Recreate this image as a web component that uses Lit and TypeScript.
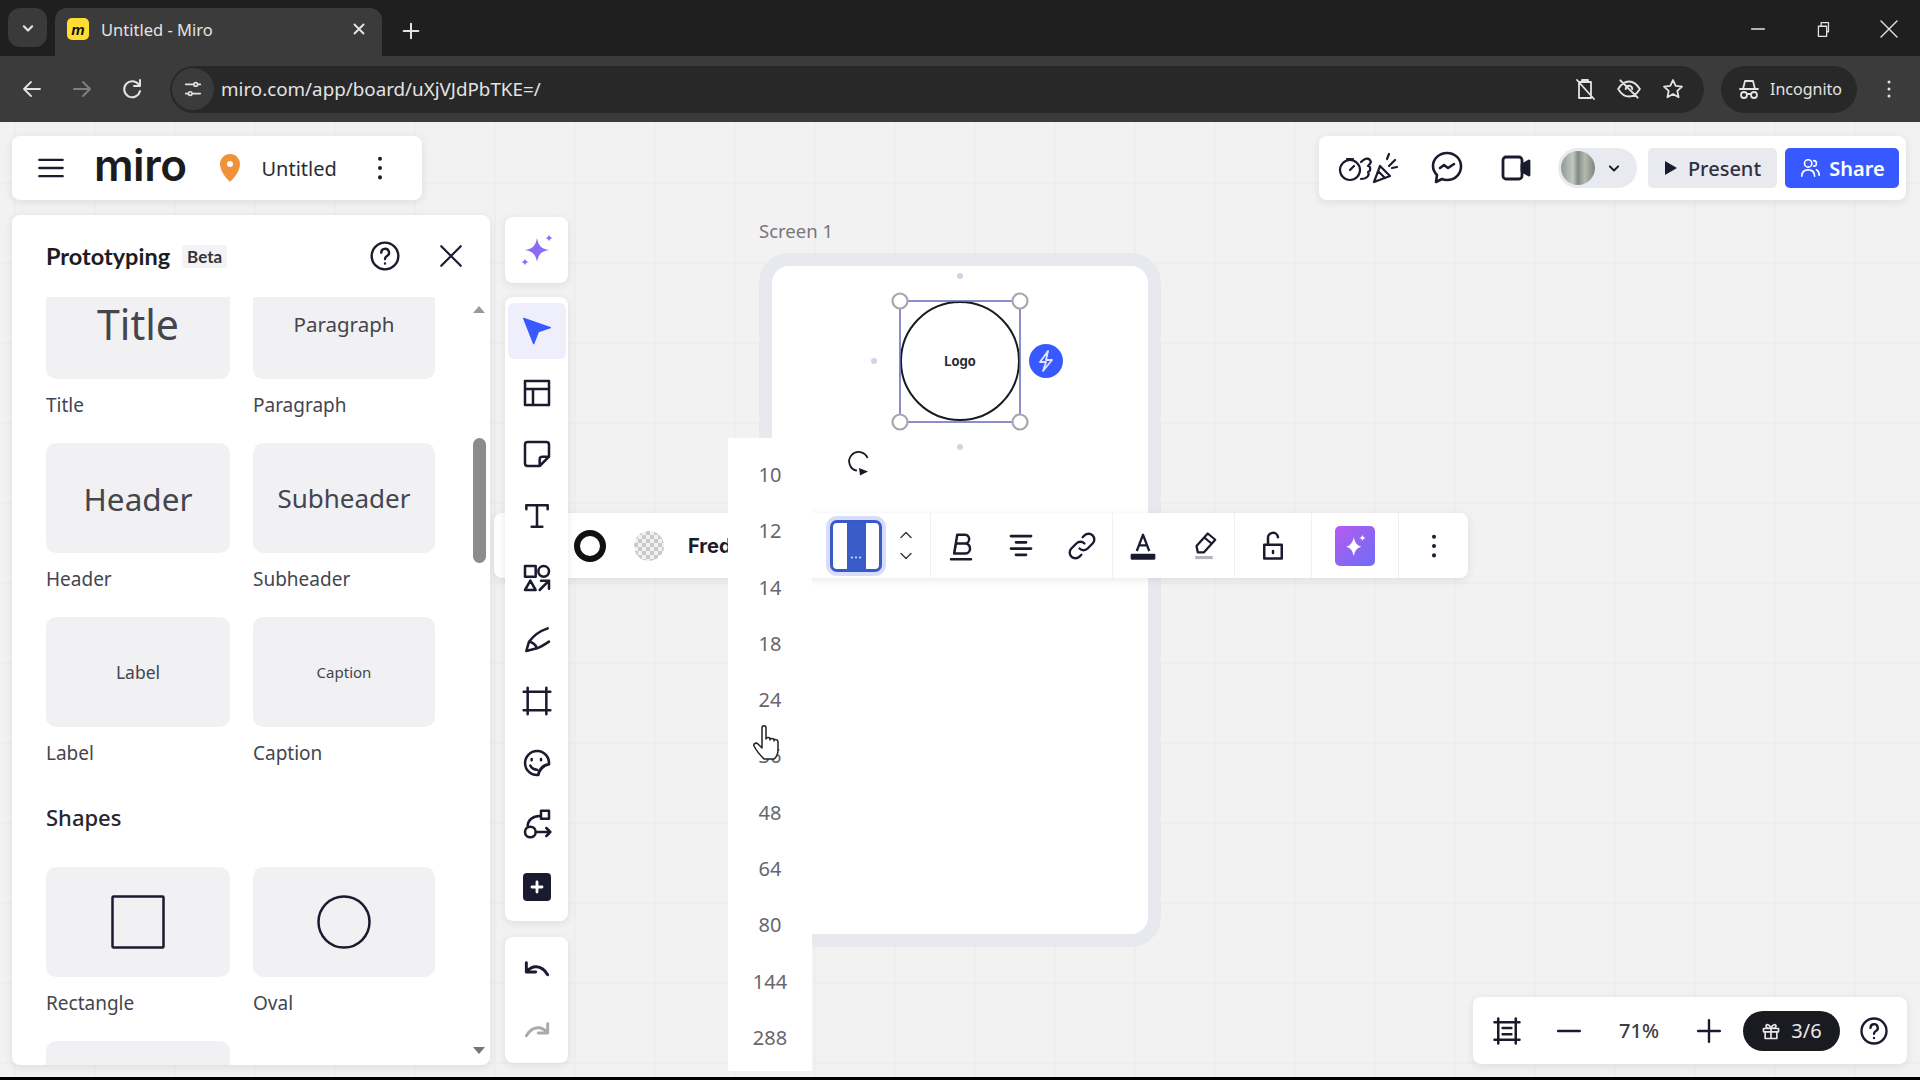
import { LitElement, html, css } from "lit";
import { customElement } from "lit/decorators.js";

const icon = (d: string, size = 30, sw = 2, fill = "none") => html`
  <svg width=${size} height=${size} viewBox="0 0 24 24" fill=${fill} stroke="currentColor"
    stroke-width=${sw} stroke-linecap="round" stroke-linejoin="round"><path d=${d}></path></svg>`;

const TOOLS = [
  "M3 3h18v18H3z M3 9h18 M9 9v12",
  "M5 3h14a2 2 0 0 1 2 2v9l-7 7H5a2 2 0 0 1-2-2V5a2 2 0 0 1 2-2z M21 14h-5a2 2 0 0 0-2 2v5",
  "M4 7V4h16v3 M12 4v16 M8 20h8",
  "M3 3h8v8H3z M21 7a4 4 0 1 1-8 0a4 4 0 0 1 8 0z M7 14l4 7H3z M14 21l7-7 M15 14h6v6",
  "M4 21l2-7C9 10 14 6 20 4 M4 21l8-2c3-1 6-3 9-5 M6 14c2 0 5 2 6 5",
  "M5 2v20 M19 2v20 M2 5h20 M2 19h20",
  "M21 13a9 9 0 1 0-8 8c1-4 4-7 8-8z M8 9v1 M15 9v1 M7 14c1 2 3 3 5 3 M13 21c0-4 4-8 8-8",
  "M15 2h6v6h-6z M11 18a4 4 0 1 1-8 0a4 4 0 0 1 8 0z M5 14c0-5 4-8 9-8 M11 18h11 M19 15l3 3-3 3",
];

const NUMBERS = ["10", "12", "14", "18", "24", "36", "48", "64", "80", "144", "288"];

const TEXT_CARDS = [
  ["Title", "t-title"], ["Paragraph", "t-para"],
  ["Header", "t-head"], ["Subheader", "t-sub"],
  ["Label", "t-label"], ["Caption", "t-cap"],
];

@customElement("app-root")
export class AppRoot extends LitElement {
  static styles = css`
    :host { display: block; width: 1920px; height: 1080px; overflow: hidden; font-family: "Noto Sans", sans-serif; background: #000; }
    .page { display: flex; flex-direction: column; height: 1080px; }

    /* browser chrome */
    .tabs { height: 56px; background: #1f1f1f; display: flex; align-items: flex-end; color: #e3e3e3; flex: none; }
    .tab-list { width: 39px; height: 39px; margin: 0 8px 9px 8px; border-radius: 12px; background: #3a3a3a; display: flex; align-items: center; justify-content: center; }
    .tab { width: 327px; height: 48px; background: #3b3b3b; border-radius: 12px 12px 0 0; display: flex; align-items: center; padding: 0 14px 6px 12px; box-sizing: border-box; font-size: 16.5px; }
    .fav { width: 22px; height: 22px; border-radius: 5px; background: #ffdd33; color: #111; display: flex; align-items: center; justify-content: center; font: italic 700 15px "Liberation Sans", sans-serif; margin-right: 12px; }
    .tab span.t { flex: 1; }
    .new-tab { margin: 0 0 14px 18px; display: flex; }
    .win { margin-left: auto; display: flex; gap: 43px; padding: 0 19px 15px 0; align-items: center; }
    .bar { height: 66px; background: #3b3b3b; display: flex; align-items: center; color: #e3e3e3; flex: none; padding-left: 20px; }
    .nav { display: flex; gap: 26px; align-items: center; width: 150px; }
    .nav span { color: #808080; display: flex; }
    .omni { width: 1534px; height: 47px; background: #282828; border-radius: 24px; display: flex; align-items: center; box-sizing: border-box; }
    .chip { width: 42px; height: 42px; margin-left: 2px; border-radius: 50%; background: #3b3b3b; display: flex; align-items: center; justify-content: center; }
    .url { font-size: 18.8px; margin-left: 7px; flex: 1; }
    .omni-icons { display: flex; gap: 19px; padding-right: 19px; align-items: center; }
    .incog { margin-left: 17px; width: 136px; height: 47px; background: #282828; border-radius: 24px; display: flex; align-items: center; gap: 9px; padding-left: 16px; box-sizing: border-box; font-size: 16px; }
    .more { margin-left: 20px; display: flex; }

    /* board */
    .board { position: relative; flex: 1; background-color: #f2f2f3;
      background-image: linear-gradient(#eeeeef 2px, transparent 2px), linear-gradient(90deg, #eeeeef 2px, transparent 2px);
      background-size: 80px 80px; background-position: 14px 60px; overflow: hidden; color: #1a1b2e; }
    .black { height: 3px; background: #000; flex: none; }
    .float { position: absolute; background: #fff; border-radius: 8px; box-shadow: 0 2px 8px rgba(34, 36, 40, 0.10); }

    .head { left: 12px; top: 14px; width: 410px; height: 64px; display: flex; align-items: center; }
    .burger { margin-left: 25px; display: flex; }
    .logo { font: 600 44px/1 "Inter", sans-serif; margin-left: 29px; letter-spacing: -0.5px; color: #1c1c1e; position: relative; top: -3px; }
    .pin { margin-left: 33px; display: flex; }
    .doc { font-size: 20px; margin-left: 20px; color: #2b2b33; }
    .head .dots { margin-left: 29px; display: flex; }

    .actions { left: 1319px; top: 14px; width: 587px; height: 64px; display: flex; align-items: center; }
    .act-ico { display: flex; align-items: center; justify-content: center; }
    .react { margin-left: 18px; }
    .chat { margin-left: 32px; }
    .video { margin-left: 38px; }
    .avatar-pill { margin-left: 27px; width: 79px; height: 40px; border-radius: 20px; background: #e9eaef; display: flex; align-items: center; padding-left: 3px; box-sizing: border-box; gap: 9px; }
    .avatar { width: 34px; height: 34px; border-radius: 50%; background: linear-gradient(90deg, #8d9a94, #c3c8c0 35%, #7f8a84 50%, #b5bab0 70%, #7b857c); }
    .present { margin-left: 11px; width: 129px; height: 40px; border-radius: 5px; background: #e9eaef; display: flex; align-items: center; justify-content: center; gap: 10px; font-size: 20px; font-weight: 500; color: #2f3040; }
    .share { margin-left: 8px; width: 114px; height: 40px; border-radius: 5px; background: #3859ff; color: #fff; display: flex; align-items: center; justify-content: center; gap: 8px; font-size: 20px; font-weight: 600; }

    /* prototyping panel */
    .panel { left: 12px; top: 93px; width: 478px; height: 850px; overflow: hidden; }
    .panel-head { height: 82px; display: flex; align-items: center; padding-left: 34px; box-sizing: border-box; }
    .panel-title { font: 700 23.5px "Lato", sans-serif; color: #1c1c24; }
    .beta { margin-left: 12px; font: 700 17px "Lato", sans-serif; background: #f3f3f6; border-radius: 3px; padding: 1px 5px; color: #33333d; }
    .help { margin-left: auto; display: flex; }
    .close { margin: 0 26px 0 37px; display: flex; }
    .scroll { height: 768px; overflow: hidden; padding-left: 34px; position: relative; }
    .grid { display: grid; grid-template-columns: 184px 182px; column-gap: 23px; margin-top: -28px; }
    .item { height: 174px; }
    .card { height: 110px; background: #f1f1f3; border-radius: 10px; display: flex; align-items: center; justify-content: center; color: #44454e; }
    .name { margin-top: 15px; font-size: 19px; line-height: 22px; color: #44454e; }
    .t-title { font-size: 41px; }
    .t-para { font-size: 20.5px; }
    .t-head { font-size: 31.5px; }
    .t-sub { font-size: 26px; }
    .t-label { font-size: 17.5px; }
    .t-cap { font-size: 15px; }
    .section { grid-column: 1 / 3; height: 76px; font-size: 22px; font-weight: 500; line-height: 52px; color: #26262e; }
    .scrollbar { position: absolute; right: 4px; top: 141px; width: 13px; height: 125px; background: #8c8c8c; border-radius: 7px; }
    .arrow { position: absolute; right: 5px; width: 0; height: 0; border-left: 6px solid transparent; border-right: 6px solid transparent; }
    .arrow.up { top: 9px; border-bottom: 7px solid #9a9a9a; }
    .arrow.down { bottom: 11px; border-top: 7px solid #757575; }

    /* tool bars */
    .ai-box { left: 505px; top: 95px; width: 63px; height: 66px; display: flex; align-items: center; justify-content: center; }
    .tools { left: 505px; top: 175px; width: 63px; height: 624px; display: flex; flex-direction: column; align-items: center; padding-top: 3px; box-sizing: border-box; }
    .tool { height: 61.7px; width: 100%; display: flex; align-items: center; justify-content: center; flex: none; }
    .tool.on { background: #eeeffb; width: 58px; height: 56px; border-radius: 6px; margin: 3px 0 2.7px; padding-bottom: 4px; box-sizing: border-box; }
    .plus { width: 28px; height: 28px; margin-top: 2px; border-radius: 4px; background: #1a1b2e; color: #fff; display: flex; align-items: center; justify-content: center; }
    .undo { left: 505px; top: 815px; width: 63px; height: 126px; display: flex; flex-direction: column; align-items: center; justify-content: space-around; padding-top: 4px; box-sizing: border-box; }
    .redo { color: #a9a9ae; display: flex; }

    /* frame on the board */
    .frame-label { position: absolute; left: 759px; top: 96px; font-size: 18.5px; color: #77777f; }
    .frame { position: absolute; left: 759px; top: 131px; width: 402px; height: 694px; box-sizing: border-box; border: 13px solid #e8e9ee; border-radius: 30px; background: #fff; }
    .sel { position: absolute; left: 840px; top: 140px; }

    /* text format bar */
    .fmt { left: 494px; top: 391px; width: 974px; height: 65px; display: flex; align-items: center; }
    .pad { width: 76px; }
    .border-cell { width: 40px; display: flex; justify-content: center; }
    .ring { width: 20px; height: 20px; border: 6px solid #111; border-radius: 50%; }
    .check-cell { width: 78px; display: flex; justify-content: center; }
    .checker { width: 30px; height: 30px; border-radius: 50%; background: repeating-conic-gradient(#c9c9c9 0 25%, #f1f1f1 0 50%) 0 0 / 8px 8px; }
    .font-name { width: 142px; font: 700 20px "Inter", sans-serif; color: #1a1b2e; white-space: nowrap; overflow: hidden; }
    .size { width: 52px; height: 52px; box-sizing: border-box; border: 3px solid #3859c8; border-radius: 7px; box-shadow: 0 0 0 4px #d9ddfb; display: flex; justify-content: center; background: #fff; }
    .size i { width: 19px; background: #3a5cc8; display: flex; align-items: flex-end; justify-content: center; padding-bottom: 10px; box-sizing: border-box; }
    .chev { width: 48px; display: flex; flex-direction: column; align-items: center; gap: 1px; color: #3c3d46; }
    .group { height: 65px; display: flex; align-items: center; justify-content: space-around; border-left: 1px solid #f0f0f3; box-sizing: border-box; }
    .g1 { width: 182px; }
    .g2 { width: 122px; }
    .g3 { width: 77px; }
    .g4 { width: 87px; }
    .g5 { width: 70px; }
    .ai-btn { width: 40px; height: 40px; border-radius: 5px; background: linear-gradient(135deg, #b45cf0, #6f6cf5); color: #fff; display: flex; align-items: center; justify-content: center; }

    /* size dropdown */
    .drop { position: absolute; left: 728px; top: 316px; width: 84px; height: 633px; background: #fff; display: flex; flex-direction: column; align-items: center; padding-top: 9px; box-sizing: border-box; font-size: 20px; color: #66666e; }
    .drop div { height: 56.3px; line-height: 56.3px; flex: none; }
    .hand { position: absolute; left: 752px; top: 602px; }

    /* zoom bar */
    .zoom { left: 1473px; top: 875px; width: 434px; height: 67px; display: flex; align-items: center; }
    .fit { margin-left: 19px; display: flex; }
    .minus { margin-left: 34px; display: flex; }
    .pct { width: 84px; margin-left: 15px; text-align: center; font-size: 20px; font-weight: 500; color: #3c3d46; }
    .zplus { margin-left: 15px; display: flex; }
    .gift { margin-left: 21px; width: 97px; height: 40px; border-radius: 20px; background: #1a1b20; color: #e8e8e8; display: flex; align-items: center; justify-content: center; gap: 10px; font-size: 20px; }
    .zhelp { margin-left: 19px; display: flex; }
  `;

  render() {
    return html`
      <div class="page">
        ${this.chrome()}
        <div class="board">
          <div class="frame-label">Screen 1</div>
          <div class="frame"></div>
          ${this.selection()}
          ${this.formatBar()}
          <div class="drop">${NUMBERS.map((n) => html`<div>${n}</div>`)}</div>
          <svg class="hand" width="32" height="38" viewBox="0 0 32 38" fill="#fff" stroke="#222" stroke-width="1.5" stroke-linejoin="round">
            <path d="M10 4c0-3 4-3 4 0v11c0-2 4-2 4 0v1c0-2 4-2 4 0v1c0-2 4-2 4 1v8c0 4-2 8-4 9H12c-2-2-8-9-10-13-1-2 2-4 4-2l4 4z"></path>
          </svg>
          ${this.header()}
          ${this.actions()}
          ${this.panel()}
          ${this.toolbars()}
          ${this.zoomBar()}
        </div>
        <div class="black"></div>
      </div>
    `;
  }

  chrome() {
    return html`
      <div class="tabs">
        <div class="tab-list">${icon("M7 10l5 5 5-5", 20, 2.6)}</div>
        <div class="tab">
          <div class="fav">m</div>
          <span class="t">Untitled - Miro</span>
          ${icon("M6 6l12 12 M18 6L6 18", 18, 2.6)}
        </div>
        <div class="new-tab">${icon("M12 4v16 M4 12h16", 22, 2.2)}</div>
        <div class="win">
          ${icon("M5 12h14", 22, 1.4)}
          ${icon("M7 9h9v11H7z M10 9V5h8v10h-2", 22, 1.4)}
          ${icon("M4 4l16 16 M20 4L4 20", 24, 1.4)}
        </div>
      </div>
      <div class="bar">
        <div class="nav">
          ${icon("M20 12H5 M11 5l-7 7 7 7", 24, 1.8)}
          <span>${icon("M4 12h15 M13 5l7 7-7 7", 24, 1.8)}</span>
          ${icon("M19 8a8 8 0 1 0 1 6 M20 3v6h-6", 24, 2)}
        </div>
        <div class="omni">
          <div class="chip">${icon("M4 7h9 M18 7h2 M4 17h2 M11 17h9 M17 7a2 2 0 1 0-4 0a2 2 0 0 0 4 0z M11 17a2 2 0 1 0-4 0a2 2 0 0 0 4 0z", 22, 1.8)}</div>
          <div class="url">miro.com/app/board/uXjVJdPbTKE=/</div>
          <div class="omni-icons">
            ${icon("M6 5h12v16H6z M9 5V3h6v2 M4 3l17 19", 24, 1.8)}
            ${icon("M2 12c3-5 6-7 10-7s7 2 10 7c-3 5-6 7-10 7s-7-2-10-7z M9 12a3 3 0 0 1 6 0 M4 4l16 16", 26, 1.8)}
            ${icon("M12 3l2.7 5.9 6.3.7-4.7 4.3 1.3 6.3L12 17l-5.6 3.2 1.3-6.3L3 9.6l6.3-.7z", 24, 1.8)}
          </div>
        </div>
        <div class="incog">
          ${icon("M3 12h18 M6 12l2-8h8l2 8 M10 18a3 3 0 1 1-6 0a3 3 0 0 1 6 0z M20 18a3 3 0 1 1-6 0a3 3 0 0 1 6 0z M10 17h4", 24, 1.8)}
          <span>Incognito</span>
        </div>
        <div class="more">${icon("M12 5v.1 M12 12v.1 M12 19v.1", 24, 3)}</div>
      </div>
    `;
  }

  header() {
    return html`
      <div class="float head">
        <div class="burger">${icon("M2 5h20 M2 12h20 M2 19h20", 28, 2)}</div>
        <div class="logo">miro</div>
        <div class="pin">
          <svg width="22" height="30" viewBox="0 0 22 30"><path d="M11 1C5 1 1 6 1 11c0 7 6 14 10 18 4-4 10-11 10-18 0-5-4-10-10-10z" fill="#f0923a"></path><circle cx="11" cy="11" r="3" fill="#fff"></circle></svg>
        </div>
        <div class="doc">Untitled</div>
        <div class="dots">${icon("M12 4v.1 M12 12v.1 M12 20v.1", 28, 3.4)}</div>
      </div>
    `;
  }

  actions() {
    return html`
      <div class="float actions">
        <div class="act-ico react">
          <svg width="62" height="36" viewBox="0 0 62 36" fill="none" stroke="#1a1b2e" stroke-width="2.2" stroke-linejoin="round" stroke-linecap="round">
            <circle cx="13" cy="20" r="10"></circle><path d="M13 20l4-4 M10 9h6"></path>
            <path d="M24 12c3-3 8-6 10 0-1 2-2 3-3 4 3 0 3 5 0 6 2 3-1 7-7 7"></path>
            <path d="M37 32l6-16 10 10z M42 22l6 6 M52 16l6-6 M50 9l2-5 M55 18l5-1"></path>
          </svg>
        </div>
        <div class="act-ico chat">
          <svg width="32" height="34" viewBox="0 0 32 34" fill="none" stroke="#1a1b2e" stroke-width="2.6" stroke-linejoin="round" stroke-linecap="round">
            <path d="M16 2c8 0 14 6 14 13.5S24 29 16 29c-2 0-3 0-5-1l-6 3 1-7c-3-3-4-6-4-9C2 8 8 2 16 2z"></path><path d="M9 17l4-3 4 3 6-4"></path>
          </svg>
        </div>
        <div class="act-ico video">
          <svg width="30" height="28" viewBox="0 0 30 28" fill="none" stroke="#1a1b2e" stroke-width="2.8" stroke-linejoin="round"><rect x="2" y="3" width="19" height="22" rx="3"></rect><path d="M21 11l7-4v14l-7-4z" fill="#1a1b2e"></path></svg>
        </div>
        <div class="avatar-pill"><div class="avatar"></div>${icon("M7 10l5 5 5-5", 20, 2.4)}</div>
        <div class="present">
          <svg width="14" height="16" viewBox="0 0 14 16"><path d="M1 1l12 7-12 7z" fill="#1a1b2e"></path></svg>
          <span>Present</span>
        </div>
        <div class="share">
          ${icon("M10 11a4 4 0 1 0 0-8a4 4 0 0 0 0 8z M3 21c0-5 3-7 7-7s7 2 7 7 M16 4a3 3 0 0 1 0 6 M19 14c2 1 3 3 3 6", 22, 1.8)}
          <span>Share</span>
        </div>
      </div>
    `;
  }

  panel() {
    return html`
      <div class="float panel">
        <div class="panel-head">
          <span class="panel-title">Prototyping</span>
          <span class="beta">Beta</span>
          <span class="help">${icon("M12 22a10 10 0 1 0 0-20a10 10 0 0 0 0 20z M9.2 9.5a2.9 2.9 0 1 1 4.3 2.5c-1 .6-1.500 1.200-1.500 2.200 M12 17.500v.1", 32, 1.8)}</span>
          <span class="close">${icon("M3 3l18 18 M21 3L3 21", 26, 2)}</span>
        </div>
        <div class="scroll">
          <div class="grid">
            ${TEXT_CARDS.map(([name, cls]) => html`
              <div class="item">
                <div class="card"><span class=${cls}>${name}</span></div>
                <div class="name">${name}</div>
              </div>`)}
            <div class="section">Shapes</div>
            <div class="item">
              <div class="card">
                <svg width="54" height="54" viewBox="0 0 54 54" fill="none" stroke="#1a1b2e" stroke-width="2.5"><rect x="1.5" y="1.5" width="51" height="51" rx="1"></rect></svg>
              </div>
              <div class="name">Rectangle</div>
            </div>
            <div class="item">
              <div class="card">
                <svg width="54" height="54" viewBox="0 0 54 54" fill="none" stroke="#1a1b2e" stroke-width="2.5"><circle cx="27" cy="27" r="25.5"></circle></svg>
              </div>
              <div class="name">Oval</div>
            </div>
            <div class="item"><div class="card"></div></div>
          </div>
          <div class="arrow up"></div>
          <div class="scrollbar"></div>
          <div class="arrow down"></div>
        </div>
      </div>
    `;
  }

  toolbars() {
    return html`
      <div class="float ai-box">
        <svg width="34" height="34" viewBox="0 0 24 24" fill="#8b6cf2">
          <path d="M12 3.5c1 5.500 3 7.500 8.500 8.500-5.500 1-7.500 3-8.500 8.500-1-5.500-3-7.500-8.500-8.500 5.500-1 7.500-3 8.500-8.500z"></path>
          <path d="M20.500 1c.3 1.500.9 2.100 2.500 2.500-1.600.4-2.200 1-2.500 2.500-.3-1.500-.9-2.100-2.500-2.500 1.600-.4 2.200-1 2.500-2.500z"></path>
          <path d="M3.500 18c.3 1.500.9 2.100 2.500 2.500-1.600.4-2.200 1-2.500 2.500-.3-1.500-.9-2.100-2.500-2.500 1.600-.4 2.200-1 2.500-2.500z"></path>
        </svg>
      </div>
      <div class="float tools">
        <div class="tool on">
          <svg width="32" height="32" viewBox="0 0 24 24"><path d="M2 4l20 7-9 3-3.5 9z" fill="#3859ff" stroke="#3859ff" stroke-width="1" stroke-linejoin="round"></path></svg>
        </div>
        ${TOOLS.map((d) => html`<div class="tool">${icon(d, 32, 1.9)}</div>`)}
        <div class="tool"><div class="plus">${icon("M12 6v12 M6 12h12", 20, 3.4)}</div></div>
      </div>
      <div class="float undo">
        ${icon("M4 5v7h7 M4 12c4-5 11-6 16 2", 32, 2.2)}
        <span class="redo">${icon("M20 5v7h-7 M20 12c-4-5-11-6-16 2", 32, 2.2)}</span>
      </div>
    `;
  }

  selection() {
    return html`
      <svg class="sel" width="230" height="220" viewBox="840 262 230 220" fill="none">
        <circle cx="960" cy="361" r="59" stroke="#1a1a24" stroke-width="2"></circle>
        <rect x="900" y="301" width="120" height="121" stroke="#6468b8" stroke-width="1.5"></rect>
        <g fill="#fff" stroke="#a6a6ac" stroke-width="2.2">
          <circle cx="900" cy="301" r="7.5"></circle><circle cx="1020" cy="301" r="7.5"></circle>
          <circle cx="900" cy="422" r="7.5"></circle><circle cx="1020" cy="422" r="7.5"></circle>
        </g>
        <g fill="#cfd3e6"><circle cx="960" cy="276" r="3"></circle><circle cx="874" cy="361" r="3"></circle><circle cx="960" cy="447" r="3"></circle></g>
        <text x="960" y="366" text-anchor="middle" font-family="Inter, sans-serif" font-weight="700" font-size="13" fill="#2a2a33">Logo</text>
        <circle cx="1046" cy="361" r="17" fill="#3859ff"></circle>
        <path d="M1048 351l-8 11h6l-3 9 9-11h-6z" stroke="#dfe4ff" stroke-width="1.8" stroke-linejoin="round"></path>
        <path d="M866 456a9.5 9.5 0 1 0-7 15" stroke="#1a1a24" stroke-width="1.8" transform="rotate(15 859 463)"></path>
        <path d="M859 468l9 3.500-8 4z" fill="#1a1a24"></path>
      </svg>
    `;
  }

  formatBar() {
    return html`
      <div class="float fmt">
        <div class="pad"></div>
        <div class="border-cell"><div class="ring"></div></div>
        <div class="check-cell"><div class="checker"></div></div>
        <div class="font-name">Fred</div>
        <div class="size">
          <i><svg width="12" height="3" viewBox="0 0 12 3" fill="#dfe6ff"><circle cx="2" cy="1.5" r="1"></circle><circle cx="6" cy="1.5" r="1"></circle><circle cx="10" cy="1.5" r="1"></circle></svg></i>
        </div>
        <div class="chev">${icon("M6 15l6-6 6 6", 20, 1.8)}${icon("M6 9l6 6 6-6", 20, 1.8)}</div>
        <div class="group g1">
          ${icon("M9 3h5.500a3.500 3.500 0 0 1 1 7 M8 10h7.500a4 4 0 0 1-.5 8H6.500z M9 3L6.500 18 M4 22.500h16", 30, 2)}
          ${icon("M4 4h16 M8 9h8 M4 14h16 M8 19h8", 30, 2.2)}
          ${icon("M10 14a4.500 4.500 0 0 0 6.500 0l4-4a4.500 4.500 0 0 0-6.500-6.500l-1.500 1.500 M14 10a4.500 4.500 0 0 0-6.500 0l-4 4a4.500 4.500 0 0 0 6.500 6.500l1.500-1.500", 30, 1.9)}
        </div>
        <div class="group g2">
          <svg width="30" height="30" viewBox="0 0 24 24" fill="none" stroke="#1a1b2e" stroke-width="1.8" stroke-linejoin="round"><path d="M7 16l5-13 5 13 M9 11.500h6"></path><rect x="3" y="19" width="18" height="3" fill="#1a1b2e"></rect></svg>
          <svg width="30" height="30" viewBox="0 0 24 24" fill="none" stroke="#1a1b2e" stroke-width="1.8" stroke-linejoin="round"><path d="M15 2l6 5-9 10-5 0-1-5z M12 5l6 5"></path><rect x="5" y="20" width="14" height="2.500" fill="#b5b5b8" stroke="none"></rect></svg>
        </div>
        <div class="group g3">${icon("M5 11h14v11H5z M8 11V6a4 4 0 0 1 8-1 M12 16v1.500", 30, 2)}</div>
        <div class="group g4">
          <div class="ai-btn">
            <svg width="30" height="30" viewBox="0 0 24 24" fill="#fff"><path d="M11 5c1 4.500 2.500 6.500 6 7.500-3.500 1-5 3-6 7.500-1-4.500-2.500-6.500-6-7.500 3.500-1 5-3 6-7.500z"></path><path d="M18 3c.3 1.500.9 2.100 2.500 2.500-1.600.4-2.200 1-2.500 2.500-.3-1.500-.9-2.100-2.500-2.500 1.600-.4 2.200-1 2.500-2.500z"></path></svg>
          </div>
        </div>
        <div class="group g5">${icon("M12 4v.1 M12 12v.1 M12 20v.1", 28, 3.4)}</div>
      </div>
    `;
  }

  zoomBar() {
    return html`
      <div class="float zoom">
        <div class="fit">${icon("M5 2v20 M19 2v20 M2 5h20 M2 19h20 M8.500 9.500h7 M8.500 14.500h7", 30, 2)}</div>
        <div class="minus">${icon("M2 12h20", 26, 2.2)}</div>
        <div class="pct">71%</div>
        <div class="zplus">${icon("M12 2v20 M2 12h20", 26, 2.2)}</div>
        <div class="gift">
          ${icon("M3 9h18v4H3z M5 13v8h14v-8 M12 9v12 M12 9c-4 0-6-1-6-3s4-3 6 3c2-6 6-5 6-3s-2 3-6 3z", 20, 2)}
          <span>3/6</span>
        </div>
        <div class="zhelp">${icon("M12 22a10 10 0 1 0 0-20a10 10 0 0 0 0 20z M9.2 9.5a2.9 2.9 0 1 1 4.3 2.5c-1 .6-1.500 1.200-1.500 2.200 M12 17.500v.1", 30, 1.9)}</div>
      </div>
    `;
  }
}
